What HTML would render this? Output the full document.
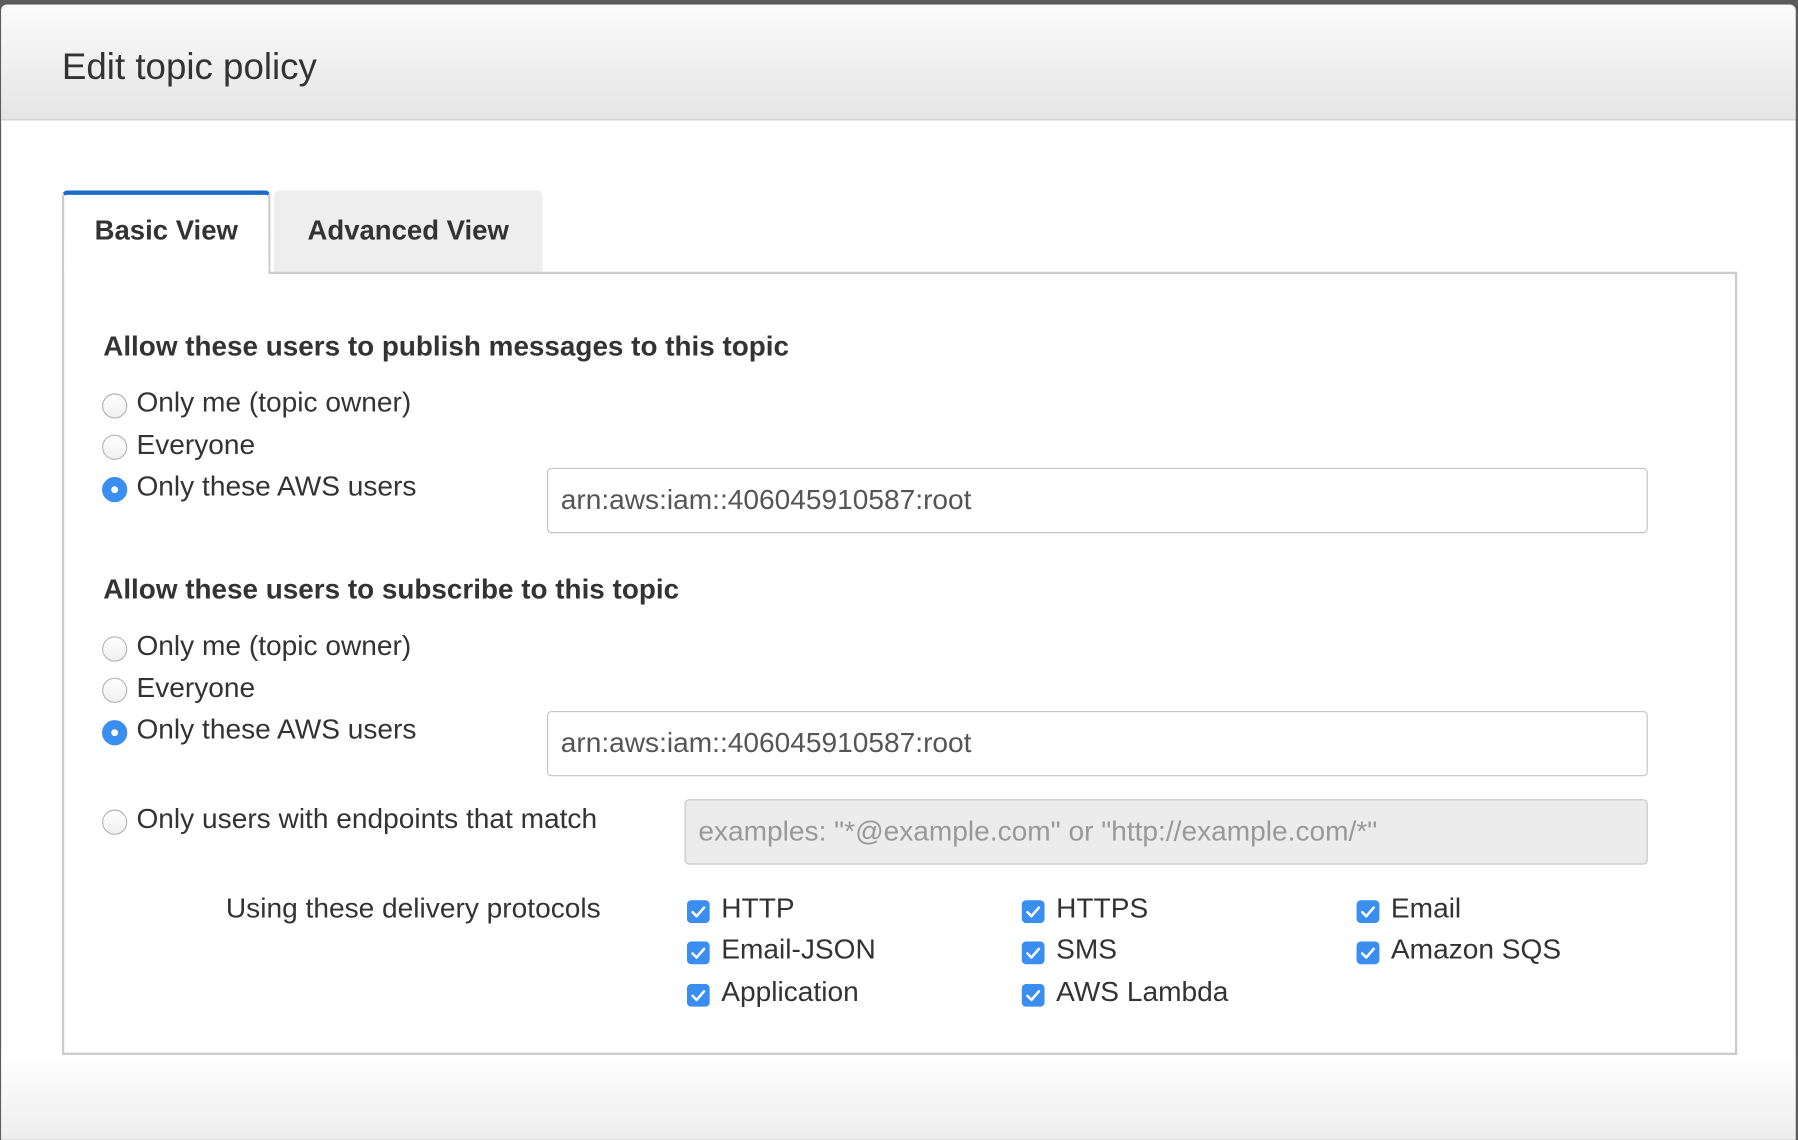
<!DOCTYPE html>
<html><head><meta charset="utf-8"><style>
html,body{margin:0;padding:0;width:1798px;height:1126px;overflow:hidden;background:#5c5c5c;font-family:"Liberation Sans",Arial,sans-serif;color:#333}
#w{position:absolute;left:0;top:0;width:1568px;height:982px;transform:scale(1.14668);transform-origin:0 0}
.dlg{position:absolute;left:1px;top:4px;width:1565px;height:990px;background:#fff;border-radius:5px 5px 0 0;overflow:hidden}
.hdr{position:absolute;left:0;top:0;right:0;height:100px;background:linear-gradient(#fbfbfb,#e5e5e5);border-bottom:1px solid #c8c8c8}
.hdr span{position:absolute;left:53px;top:36px;font-size:32px;color:#333}
.foot{position:absolute;left:0;top:916px;right:0;height:80px;background:linear-gradient(#fff,#ececec)}
.a{position:absolute;white-space:nowrap}
.tab{position:absolute;top:162px;height:71px;font-weight:bold;font-size:24px;text-align:center;line-height:72px;color:#333;box-sizing:border-box}
.box{position:absolute;left:53px;top:233px;width:1461px;height:683px;border:2px solid #ccc;box-sizing:border-box}
.h{font-weight:bold;font-size:24.3px;color:#333}
.l{font-size:24.5px;color:#333}
.r{position:absolute;width:22px;height:22px;border-radius:50%;border:1px solid #b5b5b5;box-sizing:border-box;background:linear-gradient(#fff,#f0f0f0)}
.r.on{background:#3a8ef0;border-color:#3a8ef0}
.r.on:after{content:"";position:absolute;left:7px;top:7px;width:6px;height:6px;border-radius:50%;background:#fff}
.in{position:absolute;height:57px;border:1px solid #c4c4c4;border-radius:4px;box-sizing:border-box;font-size:24.5px;color:#555;line-height:55px;padding-left:11px}
</style></head><body><div id="w">
<div class="dlg">
<div class="hdr"><span>Edit topic policy</span></div>
<div class="foot"></div>
<div class="tab" style="left:53px;width:182px;border:2px solid #ccc;border-bottom:none;border-top:4px solid #1a6cc8;border-radius:5px 5px 0 0;background:#fff;z-index:2;height:73px;line-height:64px">Basic View</div>
<div class="tab" style="left:238px;width:234px;background:#eee;border-radius:5px 5px 0 0">Advanced View</div>
<div class="box"></div>
<div class="a h" style="left:89px;top:285px">Allow these users to publish messages to this topic</div>
<div class="r" style="left:88px;top:339px"></div><div class="a l" style="left:118px;top:334px">Only me (topic owner)</div>
<div class="r" style="left:88px;top:375px"></div><div class="a l" style="left:118px;top:371px">Everyone</div>
<div class="r on" style="left:88px;top:412px"></div><div class="a l" style="left:118px;top:407px">Only these AWS users</div>
<div class="in" style="left:476px;top:404px;width:960px">arn:aws:iam::406045910587:root</div>
<div class="a h" style="left:89px;top:497px">Allow these users to subscribe to this topic</div>
<div class="r" style="left:88px;top:551px"></div><div class="a l" style="left:118px;top:546px">Only me (topic owner)</div>
<div class="r" style="left:88px;top:587px"></div><div class="a l" style="left:118px;top:583px">Everyone</div>
<div class="r on" style="left:88px;top:624px"></div><div class="a l" style="left:118px;top:619px">Only these AWS users</div>
<div class="in" style="left:476px;top:616px;width:960px">arn:aws:iam::406045910587:root</div>
<div class="r" style="left:88px;top:702px"></div><div class="a l" style="left:118px;top:697px">Only users with endpoints that match</div>
<div class="in" style="left:596px;top:693px;width:840px;background:#ececec;color:#999">examples: "*@example.com" or "http://example.com/*"</div>
<div class="a l" style="left:196px;top:775px">Using these delivery protocols</div>
<svg width="0" height="0" style="position:absolute"><defs><symbol id="ck" viewBox="0 0 20 20"><rect width="20" height="20" rx="4" fill="#3a8ef0"/><path d="M5 10.5l3.5 3.5L15 6.5" fill="none" stroke="#fff" stroke-width="2.2" stroke-linecap="round" stroke-linejoin="round"/></symbol></defs></svg>
<svg class="a" style="left:598px;top:781px" width="20" height="20"><use href="#ck"/></svg><div class="a l" style="left:628px;top:775px">HTTP</div>
<svg class="a" style="left:890px;top:781px" width="20" height="20"><use href="#ck"/></svg><div class="a l" style="left:920px;top:775px">HTTPS</div>
<svg class="a" style="left:1182px;top:781px" width="20" height="20"><use href="#ck"/></svg><div class="a l" style="left:1212px;top:775px">Email</div>
<svg class="a" style="left:598px;top:817px" width="20" height="20"><use href="#ck"/></svg><div class="a l" style="left:628px;top:811px">Email-JSON</div>
<svg class="a" style="left:890px;top:817px" width="20" height="20"><use href="#ck"/></svg><div class="a l" style="left:920px;top:811px">SMS</div>
<svg class="a" style="left:1182px;top:817px" width="20" height="20"><use href="#ck"/></svg><div class="a l" style="left:1212px;top:811px">Amazon SQS</div>
<svg class="a" style="left:598px;top:854px" width="20" height="20"><use href="#ck"/></svg><div class="a l" style="left:628px;top:848px">Application</div>
<svg class="a" style="left:890px;top:854px" width="20" height="20"><use href="#ck"/></svg><div class="a l" style="left:920px;top:848px">AWS Lambda</div>
</div>
</div></body></html>
